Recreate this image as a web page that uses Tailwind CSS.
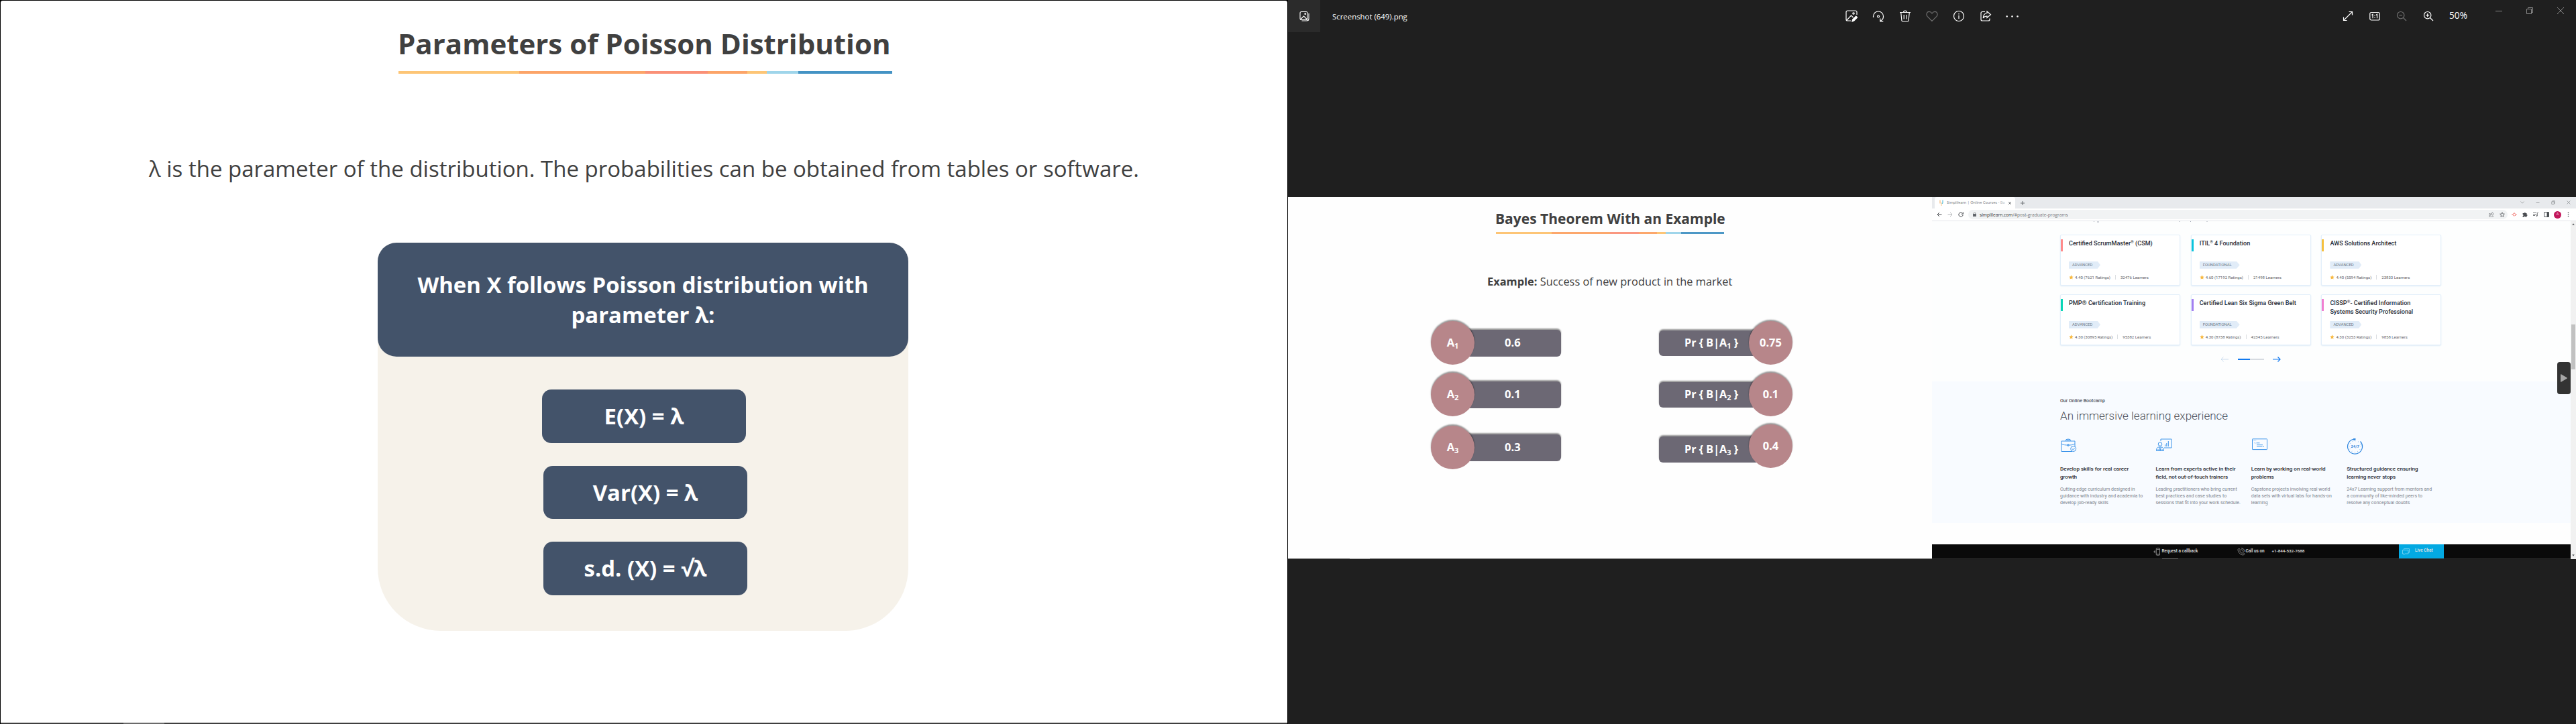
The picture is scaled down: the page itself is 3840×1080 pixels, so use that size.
<!DOCTYPE html>
<html lang="en">
<head>
<meta charset="utf-8">
<title>Poisson Distribution</title>
<script src="https://cdn.jsdelivr.net/npm/@tailwindcss/browser@4"></script>
</head>
<body class="flex h-[1080px] w-[3840px] overflow-hidden bg-[#1f1f1f] font-['Open_Sans',sans-serif]">

<!-- Slide on the left display -->
<section class="flex h-[1080px] w-[1920px] flex-col bg-black px-px pt-px">
  <div class="flex h-[1077px] flex-col rounded-t-[3px] bg-white text-[#404040]">
    <h1 class="mt-[34px] ml-[592px] h-[60px] text-[42px] leading-[60px] font-bold whitespace-nowrap">Parameters of Poisson Distribution</h1>
    <div class="mt-[11px] ml-[593px] flex h-[4px] w-[736px]">
      <span class="w-[180px] bg-[#fdc576]"></span><span class="w-[188px] bg-[#fca468]"></span><span class="w-[93px] bg-[#fa9077]"></span><span class="w-[59px] bg-[#fca468]"></span><span class="w-[29px] bg-[#fdc576]"></span><span class="w-[47px] bg-[#9fd5ea]"></span><span class="w-[140px] bg-[#4493c4]"></span>
    </div>
    <p class="mt-[117px] h-[50px] text-center text-[33px] leading-[50px] whitespace-nowrap">λ is the parameter of the distribution. The probabilities can be obtained from tables or software.</p>
    <div class="mt-[85px] ml-[562px] flex h-[579px] w-[791px] flex-col items-center rounded-t-[28px] rounded-b-[94px] bg-[#f6f2ea] font-bold text-white">
      <div class="flex h-[170px] w-full items-center justify-center rounded-[28px] bg-[#43536a] text-center text-[32.9px] leading-[45px]">When X follows Poisson distribution with<br>parameter λ:</div>
      <div class="mt-[49px] mr-[-3px] flex h-[80px] w-[304px] items-center justify-center rounded-[14px] bg-[#43536a] text-[32.9px]">E(X) = λ</div>
      <div class="mt-[34px] mr-[-7px] flex h-[79px] w-[304px] items-center justify-center rounded-[14px] bg-[#43536a] text-[32.9px]">Var(X) = λ</div>
      <div class="mt-[34px] mr-[-7px] flex h-[80px] w-[304px] items-center justify-center rounded-[14px] bg-[#43536a] text-[32.9px]">s.d. (X) = √λ</div>
    </div>
  </div>
  <div class="h-[2px] bg-[#3f3f3f] pl-[183px]"><div class="h-full w-[61px] bg-[#6a6a6a]"></div></div>
</section>

<!-- Photo viewer on the right display -->
<section class="flex h-[1080px] w-[1920px] flex-col bg-[#1f1f1f] text-white">
  <header class="flex h-[48px] w-[1920px]">
    <div class="flex w-[48px] items-center justify-center bg-[#2b2b2b]">
      <svg class="h-4 w-4" viewBox="0 0 16 16" fill="none" stroke="#fff" stroke-width="1.1"><rect x="2" y="1.5" width="11" height="12" rx="2"/><path d="M4.5 15h7.5a3 3 0 0 0 3-3V4M3 12.5l4.5-4.5 4.5 4.5"/><circle cx="9.7" cy="4.7" r=".8"/></svg>
    </div>
    <div class="ml-[18px] w-[754px] pt-[16px] text-[11.4px] leading-[17px]">Screenshot (649).png</div>
    <div class="flex w-[280px] [&>div]:flex [&>div]:h-[48px] [&>div]:w-[40px] [&>div]:items-center [&>div]:justify-center">
      <div><svg class="h-[18px] w-[18px]" viewBox="0 0 18 18" fill="none" stroke="#fff" stroke-width="1.2"><path d="M17 7V3a2 2 0 0 0-2-2H3a2 2 0 0 0-2 2v11a2 2 0 0 0 2 2h5M2 15l6.5-7 3 3"/><circle cx="12" cy="5" r="1.2"/><path d="M10 17l.7-3 5-5 2 2-5 5z" fill="#fff"/></svg></div>
      <div><svg class="h-[18px] w-[18px]" viewBox="0 0 18 18" fill="none" stroke="#fff" stroke-width="1.2"><path d="M1.5 11V9.500a7.500 7.500 0 0 1 15 0c0 3-1.500 5.200-4 6.500M11.800 12.500v4.300h4.500"/><circle cx="9" cy="9.500" r="1.500"/></svg></div>
      <div><svg class="h-[18px] w-[18px]" viewBox="0 0 18 18" fill="none" stroke="#fff" stroke-width="1.2"><path d="M1 3.500h16M6.500 3.500a2.500 2.500 0 0 1 5 0M2.700 3.500l1.200 12a1.600 1.600 0 0 0 1.600 1.500h7a1.600 1.600 0 0 0 1.600-1.500l1.200-12M7.200 7v6.500M10.800 7v6.500"/></svg></div>
      <div><svg class="h-[18px] w-[18px]" viewBox="0 0 18 18" fill="none" stroke="#6e6e6e" stroke-width="1.2"><path d="M9 16.500L2 9.300C0 7 1 2.300 4.700 2.300 6.700 2.300 8 3.300 9 5c1-1.700 2.300-2.700 4.300-2.700C17 2.300 18 7 16 9.300z"/></svg></div>
      <div><svg class="h-[18px] w-[18px]" viewBox="0 0 18 18" fill="none" stroke="#fff" stroke-width="1.200"><circle cx="9" cy="9" r="7.500"/><path d="M9 8v5M9 5v1.500"/></svg></div>
      <div><svg class="h-[18px] w-[18px]" viewBox="0 0 18 18" fill="none" stroke="#fff" stroke-width="1.200"><path d="M8 2.500H4a2 2 0 0 0-2 2V14a2 2 0 0 0 2 2h9a2 2 0 0 0 2-2v-1.500M11 2l5.500 4.800L11 11.500V9c-3 0-4.500 1-5.700 3C5.500 8 7.500 4.800 11 4.500z"/></svg></div>
      <div><svg class="h-[18px] w-[20px]" viewBox="0 0 20 18" fill="#fff"><circle cx="1.700" cy="9.500" r="1.300"/><circle cx="9.500" cy="9.500" r="1.300"/><circle cx="17.500" cy="9.500" r="1.300"/></svg></div>
    </div>
    <div class="ml-[460px] flex w-[160px] [&>div]:flex [&>div]:h-[48px] [&>div]:w-[40px] [&>div]:items-center [&>div]:justify-center">
      <div><svg class="h-4 w-4" viewBox="0 0 16 16" fill="none" stroke="#fff" stroke-width="1.200"><path d="M1.500 14.500l13-13M9.500 1.500h5v5M1.500 9.500v5h5"/></svg></div>
      <div><svg class="h-4 w-4" viewBox="0 0 16 16" fill="none" stroke="#fff" stroke-width="1.200"><rect x=".8" y="2.500" width="14.400" height="11.500" rx="2"/><path d="M3.500 6.500L5 5.300v6M10 6.500l1.500-1.200v6M8 6.300v1.200M8 9.500v1.200"/></svg></div>
      <div><svg class="h-4 w-4" viewBox="0 0 16 16" fill="none" stroke="#6e6e6e" stroke-width="1.200"><circle cx="6.700" cy="6.700" r="5.200"/><path d="M10.500 10.500l4.500 4.500M4.500 6.700h4.400"/></svg></div>
      <div><svg class="h-4 w-4" viewBox="0 0 16 16" fill="none" stroke="#fff" stroke-width="1.200"><circle cx="6.700" cy="6.700" r="5.200"/><path d="M10.500 10.500l4.500 4.500M4.200 6.700h5M6.700 4.200v5"/></svg></div>
    </div>
    <div class="w-[62px] pt-[13px] pl-[11px] text-[13.700px] leading-[20px]">50%</div>
    <div class="flex h-[32px] [&>div]:flex [&>div]:w-[46px] [&>div]:items-center [&>div]:justify-center">
      <div><svg class="h-[10px] w-[10px]" viewBox="0 0 10 10" stroke="#8a8a8a"><path d="M0 5.500h10"/></svg></div>
      <div><svg class="h-[10px] w-[10px]" viewBox="0 0 10 10" fill="none" stroke="#8a8a8a"><path d="M.5 2.500h7v7h-7zM2.500 2.500v-2h7v7h-2"/></svg></div>
      <div><svg class="h-[10px] w-[10px]" viewBox="0 0 10 10" stroke="#8a8a8a"><path d="M0 0l10 10M10 0L0 10"/></svg></div>
    </div>
  </header>

  <!-- Photo: a screenshot of two displays -->
  <div class="mt-[246px] flex h-[540px] w-[1920px]">
    <div class="flex w-[960px] flex-col bg-[#fefefe] text-[#404040]">
      <h2 class="mt-[17px] ml-[309px] h-[30px] text-[21px] leading-[30px] font-bold whitespace-nowrap">Bayes Theorem With an Example</h2>
      <div class="mt-[5px] ml-[310px] flex h-[3px] w-[340px]">
        <span class="w-[83px] bg-[#fdc576]"></span><span class="w-[87px] bg-[#fca76c]"></span><span class="w-[43px] bg-[#fa9780]"></span><span class="w-[27px] bg-[#fca76c]"></span><span class="w-[13px] bg-[#fdc576]"></span><span class="w-[23px] bg-[#9fd5ea]"></span><span class="w-[64px] bg-[#4d98c6]"></span>
      </div>
      <p class="mt-[59px] ml-[297px] h-[24px] text-[16.400px] leading-[24px] whitespace-nowrap"><b>Example:</b> Success of new product in the market</p>
      <div class="mt-[47px] ml-[213px] flex h-[354px] text-[16.500px] font-bold text-white">
        <div class="flex w-[340px] flex-col">
          <div class="flex h-[65px] items-center"><div class="z-10 flex h-[65px] w-[65px] items-center justify-center rounded-full bg-[#b7868a] shadow-[0_-2px_2px_rgba(0,0,0,.4)]"><span>A<sub class="text-[11px]">1</sub></span></div><div class="-ml-[16px] flex h-[40px] w-[145px] items-center rounded-[6px] bg-[#6c6874] pl-[61px] shadow-[0_-2px_2px_rgba(0,0,0,.4)]">0.6</div></div>
          <div class="mt-[12px] flex h-[65px] items-center"><div class="z-10 flex h-[65px] w-[65px] items-center justify-center rounded-full bg-[#b7868a] shadow-[0_-2px_2px_rgba(0,0,0,.4)]"><span>A<sub class="text-[11px]">2</sub></span></div><div class="-ml-[16px] flex h-[40px] w-[145px] items-center rounded-[6px] bg-[#6c6874] pl-[61px] shadow-[0_-2px_2px_rgba(0,0,0,.4)]">0.1</div></div>
          <div class="mt-[14px] flex h-[65px] items-center"><div class="z-10 flex h-[65px] w-[65px] items-center justify-center rounded-full bg-[#b7868a] shadow-[0_-2px_2px_rgba(0,0,0,.4)]"><span>A<sub class="text-[11px]">3</sub></span></div><div class="-ml-[16px] flex h-[40px] w-[145px] items-center rounded-[6px] bg-[#6c6874] pl-[61px] shadow-[0_-2px_2px_rgba(0,0,0,.4)]">0.3</div></div>
        </div>
        <div class="flex w-[200px] flex-col">
          <div class="flex h-[65px] items-center"><div class="flex h-[38px] w-[150px] items-center rounded-[6px] bg-[#6c6874] pl-[38px] whitespace-nowrap shadow-[0_-2px_2px_rgba(0,0,0,.4)]"><span class="text-[16.200px]">Pr { B|A<sub class="text-[11px]">1</sub> }</span></div><div class="z-10 -ml-[16px] flex h-[65px] w-[65px] items-center justify-center rounded-full bg-[#b7868a] shadow-[0_-2px_2px_rgba(0,0,0,.4)]">0.75</div></div>
          <div class="mt-[12px] flex h-[65px] items-center"><div class="flex h-[38px] w-[150px] items-center rounded-[6px] bg-[#6c6874] pl-[38px] whitespace-nowrap shadow-[0_-2px_2px_rgba(0,0,0,.4)]"><span class="text-[16.200px]">Pr { B|A<sub class="text-[11px]">2</sub> }</span></div><div class="z-10 -ml-[16px] flex h-[65px] w-[65px] items-center justify-center rounded-full bg-[#b7868a] shadow-[0_-2px_2px_rgba(0,0,0,.4)]">0.1</div></div>
          <div class="mt-[12px] flex h-[65px] items-center"><div class="mt-[10px] flex h-[39px] w-[150px] items-center rounded-[6px] bg-[#6c6874] pl-[38px] whitespace-nowrap shadow-[0_-2px_2px_rgba(0,0,0,.4)]"><span class="text-[16.200px]">Pr { B|A<sub class="text-[11px]">3</sub> }</span></div><div class="z-10 -ml-[16px] flex h-[65px] w-[65px] items-center justify-center rounded-full bg-[#b7868a] shadow-[0_-2px_2px_rgba(0,0,0,.4)]">0.4</div></div>
        </div>
      </div>
      <div class="h-px bg-[#6a6a6a] pl-[92px]"><div class="h-full w-[30px] bg-[#a0a0a0]"></div></div>
    </div>

    <!-- Browser window -->
    <div class="relative flex w-[960px] flex-col bg-[#fefefe] font-['Roboto',sans-serif]">
      <div class="flex h-[17px] items-end bg-[#e8eaed] pl-[4px]">
        <div class="flex h-[17px] w-[120px] items-center rounded-t-[3px] bg-white pl-[7px]">
          <svg class="h-[9px] w-[6px]" viewBox="0 0 6 9" fill="none" stroke-width="1.100"><path d="M1 .5v5" stroke="#f6b26b"/><path d="M5 .5v4c0 1-1 1-1.500 1" stroke="#4fb8d8"/><path d="M3 4v5" stroke="#f9cb8c"/></svg>
          <span class="ml-[5px] w-[88px] overflow-hidden font-['Open_Sans',sans-serif] text-[5.600px] leading-[9px] whitespace-nowrap text-[#6f7377]">Simplilearn | Online Courses - <span class="text-[#b5b8bb]">Bo</span></span>
          <svg class="ml-[4px] h-[4px] w-[4px]" viewBox="0 0 4 4" stroke="#5f6368" stroke-width=".9"><path d="M0 0l4 4M4 0L0 4"/></svg>
        </div>
        <svg class="mb-[5px] ml-[8px] h-[6px] w-[6px]" viewBox="0 0 6 6" stroke="#6b6e72"><path d="M3 0v6M0 3h6"/></svg>
        <div class="ml-[730px] flex h-[17px] w-[80px] items-center pb-[2px] [&>svg]:mx-[8.500px] [&>svg]:h-[6px] [&>svg]:w-[6px] [&>svg]:shrink-0">
          <svg viewBox="0 0 6 6" fill="none" stroke="#8d9093" stroke-width=".7"><path d="M.5 1.500L3 4.200 5.500 1.500"/></svg>
          <svg viewBox="0 0 6 6" stroke="#8d9093" stroke-width=".8"><path d="M.5 3.500h5"/></svg>
          <svg viewBox="0 0 6 6" fill="none" stroke="#8d9093" stroke-width=".8"><path d="M.8 1.800h3.500v3.700H.8zM2 1.500V.7h3.300v3.700h-.9"/></svg>
          <svg viewBox="0 0 6 6" stroke="#8d9093" stroke-width=".7"><path d="M.5.5l5 5M5.500.5l-5 5"/></svg>
        </div>
      </div>
      <div class="flex h-[19px] items-center border-b border-[#e3e6ea] bg-white pl-[7px]">
        <svg class="h-[8px] w-[8px]" viewBox="0 0 8 8" fill="none" stroke="#4a4d51"><path d="M7.500 4H1M4 1L1 4l3 3"/></svg>
        <svg class="ml-[8px] h-[8px] w-[8px]" viewBox="0 0 8 8" fill="none" stroke="#b4b6b9"><path d="M.5 4H7M4 1l3 3-3 3"/></svg>
        <svg class="ml-[8px] h-[8px] w-[8px]" viewBox="0 0 8 8" fill="none" stroke="#4a4d51"><path d="M6.800 2.500A3.200 3.200 0 1 0 7.200 4.600M7.300.5v2.700H4.600"/></svg>
        <div class="ml-[7px] flex h-[14px] w-[804px] items-center rounded-full bg-[#f1f3f4] pl-[7px] font-['Open_Sans',sans-serif]">
          <svg class="h-[6px] w-[5px]" viewBox="0 0 5 6" fill="none" stroke="#5f6368" stroke-width=".8"><rect x=".4" y="2.500" width="4.200" height="3.200" fill="#5f6368"/><path d="M1.200 2.500v-1a1.300 1.300 0 0 1 2.600 0v1"/></svg>
          <span class="ml-[5px] text-[6.640px] leading-[9px] whitespace-nowrap text-[#74787c]"><span class="text-[#2f3235]">simplilearn.com</span>/#post-graduate-programs</span>
          <svg class="ml-[627px] h-[8px] w-[8px]" viewBox="0 0 8 8" fill="none" stroke="#7a7d80" stroke-width=".7"><path d="M2.500 2.500H.7v5h5.600V5.800M5 .8l2.600 2.300L5 5.300V4C3.500 4 2.600 4.500 2 5.500 2.200 3.500 3.300 2.300 5 2.200z"/></svg>
          <svg class="ml-[8px] h-[8px] w-[8px]" viewBox="0 0 8 8" fill="none" stroke="#55585c" stroke-width=".8"><path d="M4 .8l1 2.200 2.400.2-1.800 1.600.5 2.400L4 6 1.900 7.200l.5-2.400L.6 3.200 3 3z"/></svg>
        </div>
        <svg class="ml-[6px] h-[8px] w-[8px]" viewBox="0 0 8 8" fill="none" stroke="#f0605a"><path d="M.3 4h1M6.700 4h1"/><path d="M4 1.800L2 3v2l2 1.200L6 5V3z" stroke-dasharray="1.800 .6"/></svg>
        <svg class="ml-[8px] h-[8px] w-[8px]" viewBox="0 0 8 8" fill="#4a4d51"><path d="M.6 2h2.100a1.100 1.100 0 1 1 2.200 0H6.500v1.900a1.100 1.100 0 1 1 0 2.200v1.700H4.700a1 1 0 0 0-2 0H.6V6a1 1 0 0 0 0-2z"/></svg>
        <svg class="ml-[8px] h-[8px] w-[8px]" viewBox="0 0 8 8" fill="none" stroke="#55585c" stroke-width=".8"><path d="M0 1.500h5M0 3.500h5M0 5.500h3M6.300 6V1.500H8"/><circle cx="5.500" cy="6" r=".7"/></svg>
        <svg class="ml-[8px] h-[8px] w-[8px]" viewBox="0 0 8 8" fill="none" stroke="#4a4d51" stroke-width=".9"><rect x=".7" y=".7" width="6.600" height="6.600"/><path d="M5 .7h2.300v6.600H5z" fill="#4a4d51"/></svg>
        <div class="ml-[7px] flex h-[11px] w-[11px] items-center justify-center rounded-full bg-[#c2185b] text-[5.500px] leading-none text-[#f5d5e0]">A</div>
        <svg class="ml-[9px] h-[8px] w-[3px]" viewBox="0 0 3 8" fill="#55585c"><circle cx="1.500" cy="1.400" r=".8"/><circle cx="1.500" cy="4" r=".8"/><circle cx="1.500" cy="6.600" r=".8"/></svg>
      </div>

      <div class="flex h-[504px]">
        <div class="flex w-[952px] flex-col">
          <div class="h-[239px] bg-[#fdfefe] pl-[191px]">
            <svg class="block h-[2px] w-[230px]" viewBox="0 0 230 2" fill="none" stroke="#8a93a3" stroke-width=".8"><path d="M51 0l-1 1M55 1h3M178 0v1M195 0l-1 1M219 0v1"/></svg>
            <div class="mt-[17.700px] grid grid-cols-[179px_179px_179px] grid-rows-[76.500px_76.500px] gap-x-[15.700px] gap-y-[12.500px] [&_h3]:h-[26px] [&_h3]:text-[9.080px] [&_h3]:leading-[13px] [&_h3]:font-medium [&_h3]:whitespace-nowrap [&_h3]:text-[#272c37]">
              <div class="flex rounded-[2px] border border-[#e3effa] bg-white pt-[6.500px] shadow-[0_1px_2px_#deebf7]"><div class="h-[18px] w-[3px] bg-[#ff8a8a]"></div>
                <div class="ml-[9px]"><h3>Certified ScrumMaster<sup class="text-[6px]">®</sup> (CSM)</h3><div class="mt-[6.500px] flex h-[11px] w-[47px] items-center bg-[#e1ecf8] pl-[5px] text-[5.900px] text-[#6e7b88] [clip-path:polygon(0_0,91%_0,100%_50%,91%_100%,0_100%)]">ADVANCED</div>
                <div class="mt-[9px] flex items-center text-[6.060px] leading-[8px] whitespace-nowrap text-[#5f646b]"><svg class="h-[7px] w-[7px]" viewBox="0 0 8 8" fill="#f7b83f"><path d="M4 .4l1.100 2.400 2.600.3-1.900 1.800.5 2.600L4 6.200 1.700 7.500l.5-2.600L.3 3.100l2.600-.3z"/></svg><span class="ml-[2px]">4.40 (7621 Ratings)</span><span class="mx-[7px] h-[7px] w-px bg-[#dcdfe2]"></span>32476 Learners</div></div></div>
              <div class="flex rounded-[2px] border border-[#e3effa] bg-white pt-[6.500px] shadow-[0_1px_2px_#deebf7]"><div class="h-[18px] w-[3px] bg-[#0bc4dc]"></div>
                <div class="ml-[9px]"><h3>ITIL<sup class="text-[6px]">®</sup> 4 Foundation</h3><div class="mt-[6.500px] flex h-[11px] w-[60px] items-center bg-[#e1ecf8] pl-[5px] text-[5.900px] text-[#6e7b88] [clip-path:polygon(0_0,92%_0,100%_50%,92%_100%,0_100%)]">FOUNDATIONAL</div>
                <div class="mt-[9px] flex items-center text-[6.060px] leading-[8px] whitespace-nowrap text-[#5f646b]"><svg class="h-[7px] w-[7px]" viewBox="0 0 8 8" fill="#f7b83f"><path d="M4 .4l1.100 2.400 2.600.3-1.900 1.800.5 2.600L4 6.200 1.700 7.500l.5-2.600L.3 3.100l2.600-.3z"/></svg><span class="ml-[2px]">4.60 (17192 Ratings)</span><span class="mx-[7px] h-[7px] w-px bg-[#dcdfe2]"></span>21498 Learners</div></div></div>
              <div class="flex rounded-[2px] border border-[#e3effa] bg-white pt-[6.500px] shadow-[0_1px_2px_#deebf7]"><div class="h-[18px] w-[3px] bg-[#f5c03e]"></div>
                <div class="ml-[9px]"><h3>AWS Solutions Architect</h3><div class="mt-[6.500px] flex h-[11px] w-[47px] items-center bg-[#e1ecf8] pl-[5px] text-[5.900px] text-[#6e7b88] [clip-path:polygon(0_0,91%_0,100%_50%,91%_100%,0_100%)]">ADVANCED</div>
                <div class="mt-[9px] flex items-center text-[6.060px] leading-[8px] whitespace-nowrap text-[#5f646b]"><svg class="h-[7px] w-[7px]" viewBox="0 0 8 8" fill="#f7b83f"><path d="M4 .4l1.100 2.400 2.600.3-1.900 1.800.5 2.600L4 6.200 1.700 7.500l.5-2.600L.3 3.100l2.600-.3z"/></svg><span class="ml-[2px]">4.40 (5594 Ratings)</span><span class="mx-[7px] h-[7px] w-px bg-[#dcdfe2]"></span>23833 Learners</div></div></div>
              <div class="flex rounded-[2px] border border-[#e3effa] bg-white pt-[6.500px] shadow-[0_1px_2px_#deebf7]"><div class="h-[18px] w-[3px] bg-[#0ad6b6]"></div>
                <div class="ml-[9px]"><h3>PMP® Certification Training</h3><div class="mt-[6.500px] flex h-[11px] w-[47px] items-center bg-[#e1ecf8] pl-[5px] text-[5.900px] text-[#6e7b88] [clip-path:polygon(0_0,91%_0,100%_50%,91%_100%,0_100%)]">ADVANCED</div>
                <div class="mt-[9px] flex items-center text-[6.060px] leading-[8px] whitespace-nowrap text-[#5f646b]"><svg class="h-[7px] w-[7px]" viewBox="0 0 8 8" fill="#f7b83f"><path d="M4 .4l1.100 2.400 2.600.3-1.900 1.800.5 2.600L4 6.200 1.700 7.500l.5-2.600L.3 3.100l2.600-.3z"/></svg><span class="ml-[2px]">4.30 (30895 Ratings)</span><span class="mx-[7px] h-[7px] w-px bg-[#dcdfe2]"></span>95382 Learners</div></div></div>
              <div class="flex rounded-[2px] border border-[#e3effa] bg-white pt-[6.500px] shadow-[0_1px_2px_#deebf7]"><div class="h-[18px] w-[3px] bg-[#a37ff0]"></div>
                <div class="ml-[9px]"><h3>Certified Lean Six Sigma Green Belt</h3><div class="mt-[6.500px] flex h-[11px] w-[60px] items-center bg-[#e1ecf8] pl-[5px] text-[5.900px] text-[#6e7b88] [clip-path:polygon(0_0,92%_0,100%_50%,92%_100%,0_100%)]">FOUNDATIONAL</div>
                <div class="mt-[9px] flex items-center text-[6.060px] leading-[8px] whitespace-nowrap text-[#5f646b]"><svg class="h-[7px] w-[7px]" viewBox="0 0 8 8" fill="#f7b83f"><path d="M4 .4l1.100 2.400 2.600.3-1.900 1.800.5 2.600L4 6.200 1.700 7.500l.5-2.600L.3 3.100l2.600-.3z"/></svg><span class="ml-[2px]">4.30 (8738 Ratings)</span><span class="mx-[7px] h-[7px] w-px bg-[#dcdfe2]"></span>42345 Learners</div></div></div>
              <div class="flex rounded-[2px] border border-[#e3effa] bg-white pt-[6.500px] shadow-[0_1px_2px_#deebf7]"><div class="h-[18px] w-[3px] bg-[#f07fd0]"></div>
                <div class="ml-[9px]"><h3>CISSP<sup class="text-[6px]">®</sup>- Certified Information<br>Systems Security Professional</h3><div class="mt-[6.500px] flex h-[11px] w-[47px] items-center bg-[#e1ecf8] pl-[5px] text-[5.900px] text-[#6e7b88] [clip-path:polygon(0_0,91%_0,100%_50%,91%_100%,0_100%)]">ADVANCED</div>
                <div class="mt-[9px] flex items-center text-[6.060px] leading-[8px] whitespace-nowrap text-[#5f646b]"><svg class="h-[7px] w-[7px]" viewBox="0 0 8 8" fill="#f7b83f"><path d="M4 .4l1.100 2.400 2.600.3-1.900 1.800.5 2.600L4 6.200 1.700 7.500l.5-2.600L.3 3.100l2.600-.3z"/></svg><span class="ml-[2px]">4.30 (3253 Ratings)</span><span class="mx-[7px] h-[7px] w-px bg-[#dcdfe2]"></span>9858 Learners</div></div></div>
            </div>
            <div class="mt-[15px] flex h-[12px] items-center pl-[239px]">
              <svg class="h-[8px] w-[12px]" viewBox="0 0 12 8" fill="none" stroke="#cbdcee"><path d="M12 4H1M4.500.5L1 4l3.500 3.500"/></svg>
              <div class="ml-[14px] flex h-[2px] w-[39px] bg-[#d6dbe1]"><div class="w-[18px] bg-[#1179ef]"></div></div>
              <svg class="ml-[13px] h-[8px] w-[12px]" viewBox="0 0 12 8" fill="none" stroke="#1179ef" stroke-width="1.200"><path d="M0 4h11M7.500.5L11 4 7.500 7.500"/></svg>
            </div>
          </div>
          <div class="h-[211px] bg-[#f8fbff] pt-[23.500px] pl-[191px]">
            <p class="h-[10px] text-[7.030px] leading-[10px] font-medium text-[#4c5059]">Our Online Bootcamp</p>
            <h2 class="mt-[5px] h-[24px] text-[17px] leading-[24px] font-light whitespace-nowrap text-[#4b4f58]">An immersive learning experience</h2>
            <div class="mt-[22px] grid w-[580px] grid-cols-[142.400px_142.400px_142.400px_142.400px] [&_h3]:mt-[14px] [&_h3]:text-[8.070px] [&_h3]:leading-[12px] [&_h3]:font-medium [&_h3]:whitespace-nowrap [&_h3]:text-[#272a31] [&_p]:mt-[7.500px] [&_p]:text-[6.980px] [&_p]:leading-[10px] [&_p]:whitespace-nowrap [&_p]:text-[#7b828b] [&_svg]:h-[26px] [&_svg]:w-[26px]">
              <div><svg viewBox="0 0 26 26" fill="none" stroke="#3c94ea"><path d="M18 19.500H2V4h20v9M2 8c3 1.800 6 2 10 2s7-.2 10-2M8 3.500a4 2.500 0 0 1 8 0M9.500 3.500a2.500 1.300 0 0 1 5 0"/><circle cx="12" cy="10" r="1.300"/><circle cx="19.700" cy="15.500" r="4" fill="#f8fbff"/><path d="M17.900 15.500l1.400 1.400 2.400-2.700"/></svg><h3>Develop skills for real career<br>growth</h3><p>Cutting-edge curriculum designed in<br>guidance with industry and academia to<br>develop job-ready skills</p></div>
              <div><svg viewBox="0 0 26 26" fill="none" stroke="#3c94ea"><path d="M8 4V1h16v13H13M14.500 12v-3M16.800 12V7M19.300 12V4"/><circle cx="7" cy="8.500" r="2.800"/><path d="M1.500 18.500c0-4 1.500-5.500 3.500-5.500h4c2 0 3.500 1.500 3.500 5.500zM5.500 13l1.500 5 1.500-5M4 16v2.500M10 16v2.500"/></svg><h3>Learn from experts active in their<br>field, not out-of-touch trainers</h3><p>Leading practitioners who bring current<br>best practices and case studies to<br>sessions that fit into your work schedule.</p></div>
              <div><svg viewBox="0 0 26 26" fill="none" stroke="#3c94ea"><rect x="1.500" y=".8" width="22" height="15.800" rx=".6"/><path d="M2.500 2.800h5" stroke-width=".6" stroke-dasharray="1 .6"/><path d="M7.500 6.800h5M8 9.700h9M8 12h8.500M5.800 6l-.8.800.8.800M18 11.200l.8.800-.8.800" stroke-width=".9"/></svg><h3>Learn by working on real-world<br>problems</h3><p>Capstone projects involving real world<br>data sets with virtual labs for hands-on<br>learning</p></div>
              <div><svg viewBox="0 0 26 26" fill="none" stroke="#2f87e0"><path d="M11 1.200A11 11 0 1 0 20.500 4.500" stroke-width="1.200"/><path d="M10.500-.5l3 1.500-2.500 2z" fill="#2f87e0"/><circle cx="12.700" cy="12" r="8.500" stroke-width="1.300" stroke-opacity=".55" stroke-dasharray=".7 3.750"/><text x="12.700" y="14" text-anchor="middle" font-family="Roboto" font-size="6" font-weight="700" fill="#2f87e0" stroke="none">24/7</text></svg><h3>Structured guidance ensuring<br>learning never stops</h3><p>24x7 Learning support from mentors and<br>a community of like-minded peers to<br>resolve any conceptual doubts</p></div>
            </div>
          </div>
          <div class="mt-[32px] flex h-[21px] items-center bg-[#0a0a0a] pl-[330px] text-[6.400px] font-medium whitespace-nowrap text-[#e4e4e4]">
            <svg class="h-[12px] w-[10px] shrink-0" viewBox="0 0 10 12" fill="none" stroke="#b8b8b8" stroke-width=".7"><rect x="4.300" y=".8" width="5.200" height="10.400" rx=".8"/><path d="M5 2.500h4M5 9.500h4M2.800 3.800L.7 6l2.100 2.200M1 6h2.500"/></svg>
            <span class="ml-[2.500px] w-[112px] pt-px">Request a callback</span>
            <svg class="h-[12px] w-[12px] shrink-0" viewBox="0 0 12 12" fill="none" stroke="#b8b8b8" stroke-width=".7"><path d="M2.700 1L1 2.700C1 7 5 11 9.300 11l1.700-1.700-2.300-2-1.400 1C5.800 7.800 4.200 6.200 3.700 4.700l1-1.400zM6 2.800a3.300 3.300 0 0 1 3.200 3.200M6 .8A5.200 5.200 0 0 1 11.200 6"/></svg>
            <span class="ml-[1px] w-[39px] pt-px">Call us on</span>
            <span class="w-[189px] pt-px text-[6.260px]">+1-844-532-7688</span>
            <div class="flex h-[21px] w-[67px] items-center bg-[#03a9e2] pl-[5px]">
              <svg class="h-[10px] w-[11px]" viewBox="0 0 11 10" fill="none" stroke="#9be0f7" stroke-width=".7"><path d="M.5 2.500h8.500v5.500H4L2.500 9.500V8h-2zM2.500 2.500V.6h8v5.600H9"/></svg>
              <span class="ml-[8.500px] -mt-px">Live Chat</span>
            </div>
          </div>
          <div class="h-px bg-[#2e2e2e] pl-[343px]"><div class="h-full w-[24px] bg-[#6a6a6a]"></div></div>
        </div>
        <div class="flex w-[8px] flex-col items-center bg-[#f1f1f1]">
          <svg class="mt-[3px] h-[3px] w-[4px]" viewBox="0 0 4 3" fill="#55585c"><path d="M2 .3L3.800 2.700H.2z"/></svg>
          <div class="mt-[148px] h-[67px] w-[6px] bg-[#c1c1c1]"></div>
          <svg class="mt-[276px] h-[3px] w-[4px]" viewBox="0 0 4 3" fill="#55585c"><path d="M2 2.700L.2.300h3.600z"/></svg>
        </div>
      </div>
      <!-- Next-photo button floating over the picture -->
      <div class="absolute top-[246px] left-[932px] flex h-[48px] w-[20px] items-center justify-center rounded-[4px] bg-[#333]">
        <svg class="h-[12px] w-[10px]" viewBox="0 0 10 12" fill="#a6a6a6"><path d="M0 1Q0-.3 1.300.4L9.300 5.200q1 .8 0 1.600L1.300 11.600Q0 12.300 0 11z"/></svg>
      </div>
    </div>
  </div>
</section>
</body>
</html>
